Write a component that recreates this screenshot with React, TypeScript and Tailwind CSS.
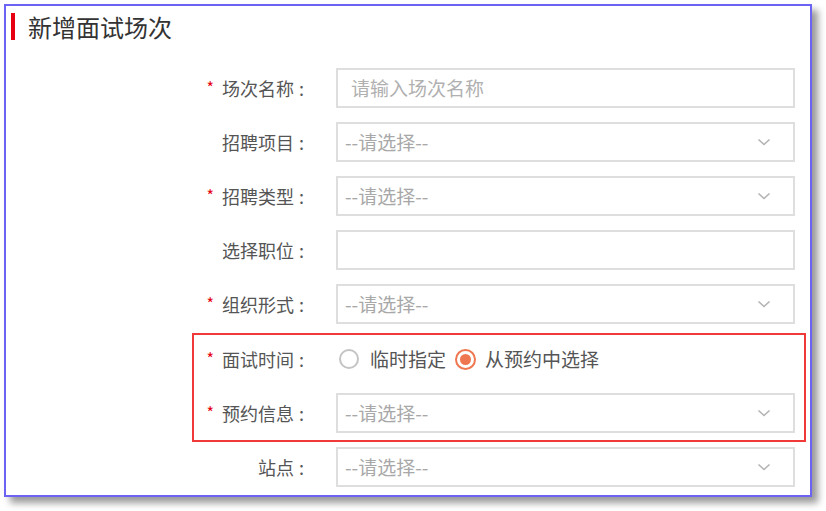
import React from "react";

const Chevron = () => (
  <svg width="14" height="8" viewBox="0 0 14 8" className="shrink-0">
    <path d="M1.5 1.5 L7 6.5 L12.5 1.5" fill="none" stroke="#b3b3b3" strokeWidth="1.6" />
  </svg>
);

type RowProps = { label: string; required?: boolean; children: React.ReactNode };

const Row = ({ label, required, children }: RowProps) => (
  <div className="flex items-center h-[40px]">
    <div className="w-[330px] shrink-0 flex items-center justify-end pr-[32px] text-[18px] text-[#555]">
      {required && <span className="text-[#e60012] text-[16px] mr-[8px] relative -top-[1px]">*</span>}
      <span>{label}</span>
      <span className="ml-[5px]">:</span>
    </div>
    {children}
  </div>
);

const Select = () => (
  <div className="w-[459px] h-[40px] border-2 border-[#dedede] flex items-center justify-between pl-[7px] pr-[22px] text-[19px] text-[#a8a8a8]">
    <span>--请选择--</span>
    <Chevron />
  </div>
);

export default function App() {
  return (
    <div
      className="w-[826px] h-[511px] bg-white pt-[4px] pl-[4px] relative"
      style={{ fontFamily: '"Noto Sans CJK SC", "Noto Sans", sans-serif' }}
    >
      <div className="w-[808px] h-[493px] border-2 border-[#6c63f5] bg-white shadow-[6px_6px_7px_rgba(0,0,0,0.4)]">
        <div className="flex items-center pl-[5px] pt-[7px] h-[34px]">
          <div className="w-[4px] h-[27px] bg-[#e60012]" />
          <div className="ml-[13px] text-[24px] text-[#333] leading-none">新增面试场次</div>
        </div>
        <div className="mt-[28px] flex flex-col gap-[14px]">
          <Row label="场次名称" required>
            <div className="w-[459px] h-[40px] border-2 border-[#dedede] flex items-center pl-[13px] text-[19px] text-[#b0b0b0]">
              请输入场次名称
            </div>
          </Row>
          <Row label="招聘项目">
            <Select />
          </Row>
          <Row label="招聘类型" required>
            <Select />
          </Row>
          <Row label="选择职位">
            <div className="w-[459px] h-[40px] border-2 border-[#dedede]" />
          </Row>
          <Row label="组织形式" required>
            <Select />
          </Row>
          <div className="mt-[1px]">
            <Row label="面试时间" required>
              <div className="flex items-center text-[19px] text-[#555] pl-[3px]">
                <span className="w-[20px] h-[20px] rounded-full border-2 border-[#c4c4c4] bg-white" />
                <span className="ml-[11px]">临时指定</span>
                <span className="ml-[9px] w-[21px] h-[21px] rounded-full border-2 border-[#ee7650] flex items-center justify-center">
                  <span className="w-[11px] h-[11px] rounded-full bg-[#ee7650]" />
                </span>
                <span className="ml-[9px]">从预约中选择</span>
              </div>
            </Row>
          </div>
          <Row label="预约信息" required>
            <Select />
          </Row>
          <Row label="站点">
            <Select />
          </Row>
        </div>
      </div>
      <div className="absolute left-[192px] top-[333px] w-[614px] h-[109px] border-2 border-[#f03a3a] pointer-events-none" />
    </div>
  );
}
